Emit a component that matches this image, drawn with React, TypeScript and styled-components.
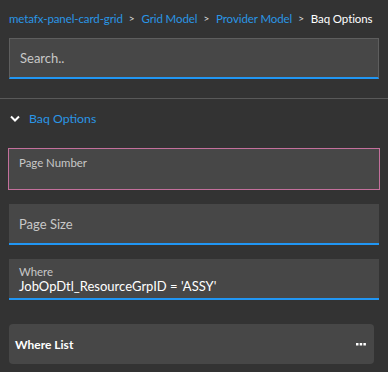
import React, { FC } from 'react';
import styled, { createGlobalStyle } from 'styled-components';

const GlobalStyle = createGlobalStyle`
	html, body {
		margin: 0;
		padding: 0;
		background: #333333;
	}
	body {
		font-family: Lato, 'Noto Sans', sans-serif;
	}
`;

const Panel = styled.div`
	width: 388px;
	height: 372px;
	background: #333333;
	display: flex;
	flex-direction: column;
	overflow: hidden;
`;

const Crumbs = styled.div`
	display: flex;
	align-items: center;
	padding: 9px 9px 0;
	height: 18px;
	font-size: 11.5px;
	letter-spacing: -0.1px;
	white-space: nowrap;
`;

const Crumb = styled.span<{ $current?: boolean }>`
	color: ${(p) => (p.$current ? '#ffffff' : '#2a96e6')};
`;

const Sep = styled.span`
	color: #e0e0e0;
	font-size: 10px;
	padding: 0 7px 0 6px;
`;

const SearchBox = styled.div`
	margin: 11px 9px 0;
	height: 41px;
	box-sizing: border-box;
	background: #474747;
	border: 1px solid #5e5e5e;
	border-bottom: 2px solid #2196f3;
	display: flex;
	align-items: center;
	padding: 0 10px;
	font-size: 13px;
	color: #c8c8c8;
`;

const Divider = styled.div`
	margin-top: 19px;
	height: 1px;
	background: #595959;
`;

const Section = styled.div`
	display: flex;
	align-items: center;
	gap: 9px;
	padding: 11px 10px 0;
	height: 16px;
	font-size: 12.3px;
	color: #2a96e6;
`;

const Fields = styled.div`
	display: flex;
	flex-direction: column;
	padding: 0 8px;
	margin-top: 22px;
`;

const Field = styled.div<{ $variant: 'pink' | 'blue' }>`
	height: 41px;
	box-sizing: border-box;
	background: #474747;
	display: flex;
	flex-direction: column;
	justify-content: center;
	padding: 3px 10px 0;
	margin-bottom: 14px;
	${(p) =>
		p.$variant === 'pink'
			? 'height: 42px; border: 1px solid #c4709c; justify-content: flex-start; padding-top: 7px;'
			: 'border-bottom: 2px solid #2196f3; margin-left: 1px; margin-right: 1px;'}
`;

const Label = styled.div<{ $large?: boolean }>`
	font-size: ${(p) => (p.$large ? '13px' : '11.4px')};
	color: #c8c8c8;
	line-height: 1.2;
`;

const Value = styled.div`
	font-size: 13px;
	color: #ffffff;
	line-height: 1.3;
`;

const Card = styled.div`
	margin: 10px 14px 0 9px;
	height: 40px;
	background: #474747;
	border-radius: 4px;
	display: flex;
	align-items: center;
	justify-content: space-between;
	padding: 0 8px 0 6px;
	font-size: 12px;
	font-weight: 700;
	color: #ffffff;
`;

const Chevron: FC = () => (
	<svg width="10" height="7" viewBox="0 0 10 7">
		<path d="M1 1.5 L5 5.5 L9 1.5" fill="none" stroke="#ffffff" strokeWidth="2" />
	</svg>
);

const Dots: FC = () => (
	<svg width="10" height="3" viewBox="0 0 10 3">
		<rect x="0" y="0" width="2.5" height="2.5" fill="#ffffff" />
		<rect x="3.7" y="0" width="2.5" height="2.5" fill="#ffffff" />
		<rect x="7.4" y="0" width="2.5" height="2.5" fill="#ffffff" />
	</svg>
);

const App: FC = () => (
	<Panel>
		<GlobalStyle />
		<Crumbs>
			<Crumb>metafx-panel-card-grid</Crumb>
			<Sep>&gt;</Sep>
			<Crumb>Grid Model</Crumb>
			<Sep>&gt;</Sep>
			<Crumb>Provider Model</Crumb>
			<Sep>&gt;</Sep>
			<Crumb $current>Baq Options</Crumb>
		</Crumbs>
		<SearchBox>Search..</SearchBox>
		<Divider />
		<Section>
			<Chevron />
			Baq Options
		</Section>
		<Fields>
			<Field $variant="pink">
				<Label>Page Number</Label>
			</Field>
			<Field $variant="blue">
				<Label $large>Page Size</Label>
			</Field>
			<Field $variant="blue">
				<Label>Where</Label>
				<Value>JobOpDtl_ResourceGrpID = 'ASSY'</Value>
			</Field>
		</Fields>
		<Card>
			Where List
			<Dots />
		</Card>
	</Panel>
);

export default App;
